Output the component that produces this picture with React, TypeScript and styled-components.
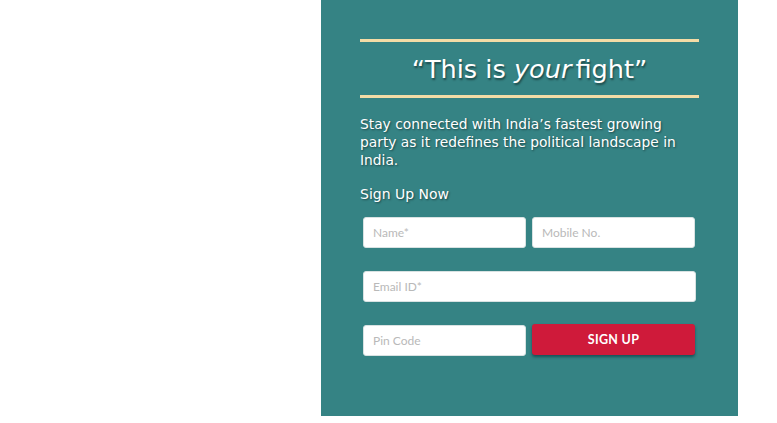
import React from "react";
import styled, { createGlobalStyle } from "styled-components";

const Global = createGlobalStyle`
  html, body { margin: 0; padding: 0; background: #ffffff; }
  body { font-family: "DejaVu Sans", Verdana, sans-serif; }
  * { box-sizing: border-box; }
`;

const Page = styled.div`
  display: flex;
  padding-left: 321px;
`;

const Panel = styled.section`
  width: 417px;
  height: 416px;
  background: #358384;
  padding: 39px 39px 0 39px;
  color: #ffffff;
`;

const Rule = styled.hr`
  margin: 0;
  border: 0;
  height: 3px;
  background: #f3dca6;
`;

const Title = styled.h1`
  margin: 0;
  height: 53px;
  display: flex;
  align-items: center;
  justify-content: center;
  font-family: "DejaVu Sans", Verdana, sans-serif;
  font-weight: normal;
  font-size: 25.6px;
  text-shadow: 1px 2px 2px rgba(0, 0, 0, 0.45);
  em { font-style: italic; margin-right: 4px; }
`;

const Lead = styled.p`
  margin: 17px 12px 16px 0;
  font-size: 13.8px;
  line-height: 18px;
  text-shadow: 1px 1px 2px rgba(0, 0, 0, 0.45);
`;

const SubHead = styled.h2`
  margin: 0;
  font-weight: normal;
  font-size: 14px;
  line-height: 18px;
  text-shadow: 1px 1px 2px rgba(0, 0, 0, 0.45);
`;

const Form = styled.form`
  margin: 14px 3px 0 3px;
  display: grid;
  grid-template-columns: 163px 163px;
  column-gap: 6px;
  row-gap: 23px;
`;

const Field = styled.input<{ $wide?: boolean }>`
  grid-column: ${(p) => (p.$wide ? "1 / span 2" : "auto")};
  height: 31px;
  width: ${(p) => (p.$wide ? "333px" : "163px")};
  border: 1px solid #d8e2e2;
  border-radius: 3px;
  background: #ffffff;
  padding: 0 9px;
  font-family: Lato, "Noto Sans", sans-serif;
  font-size: 12px;
  color: #333;
  outline: none;
  &::placeholder { color: #b9b9b9; }
`;

const Submit = styled.button`
  height: 31px;
  margin-top: -1px;
  border: 0;
  border-radius: 3px;
  background: #cf1a3a;
  color: #ffffff;
  font-family: Lato, "Noto Sans", sans-serif;
  font-weight: 700;
  font-size: 12.5px;
  letter-spacing: 0.3px;
  box-shadow: 0 2px 3px rgba(0, 40, 50, 0.55);
  cursor: pointer;
`;

export default function App() {
  return (
    <>
      <Global />
      <Page>
        <Panel>
          <Rule />
          <Title>
            “This is&nbsp;<em>your</em>fight”
          </Title>
          <Rule />
          <Lead>
            Stay connected with India’s fastest growing party as it redefines the political landscape in India.
          </Lead>
          <SubHead>Sign Up Now</SubHead>
          <Form onSubmit={(e) => e.preventDefault()}>
            <Field placeholder="Name*" />
            <Field placeholder="Mobile No." />
            <Field $wide placeholder="Email ID*" />
            <Field placeholder="Pin Code" />
            <Submit type="submit">SIGN UP</Submit>
          </Form>
        </Panel>
      </Page>
    </>
  );
}
